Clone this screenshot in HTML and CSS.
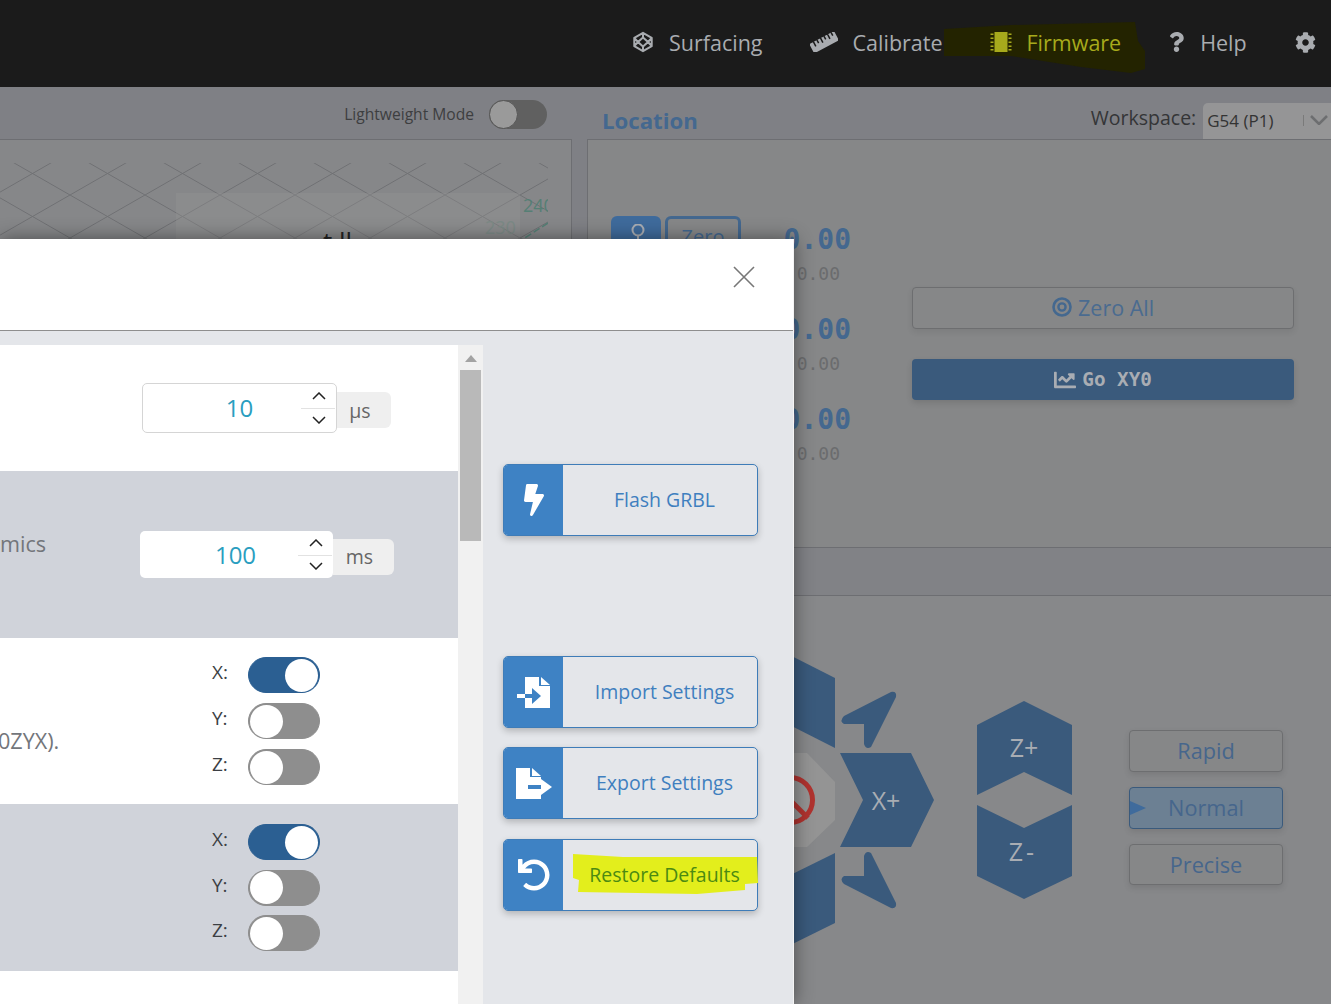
FILE: index.html
```html
<!DOCTYPE html>
<html lang="en">
<head>
  <meta charset="UTF-8">
  <meta name="viewport" content="width=device-width, initial-scale=1">
  <title>Firmware</title>
  <link rel="stylesheet" href="styles.css">
</head>
<body>
  <header class="topbar">
    <nav class="nav">
      <a class="nav-item nav-surfacing">
        <svg class="nav-icon" viewBox="0 0 24 24" width="22" height="22" fill="none" stroke="currentColor" stroke-width="2.2" stroke-linejoin="round"><path d="M12 2l9.5 5.5v9L12 22l-9.5-5.500v-9zM12 7l5.500 5-5.500 5-5.500-5zM12 2v5M12 17v5M2.500 7.500l4 4.500M21.500 7.500l-4 4.500M2.500 16.500l4-4.500M21.500 16.500l-4-4.500"/></svg>
        <span>Surfacing</span>
      </a>
      <a class="nav-item nav-calibrate">
        <svg class="nav-icon" viewBox="0 0 28 20" width="28" height="20"><g transform="rotate(-28 14 10)"><path fill="currentColor" fill-rule="evenodd" d="M0 5h28v10.500H0zM4 5v5h1.500V5zM8 5v3.500h1.500V5zM12 5v5h1.500V5zM16 5v3.500h1.500V5zM20 5v5h1.500V5zM24 5v3.500h1.500V5z"/></g></svg>
        <span>Calibrate</span>
      </a>
      <a class="nav-item nav-firmware">
        <svg class="scribble" viewBox="0 0 201 52" width="201" height="52"><polygon fill="#232300" points="0,7 67,3 191,0 194,19 201,29 201,47 187,51 137,45 67,34 0,34"/></svg>
        <svg class="nav-icon" viewBox="0 0 22 22" width="22" height="22"><path fill="currentColor" d="M4.500 1h13v20h-13zM0.500 2.500h3v1.500h-3zM0.500 6.500h3v1.500h-3zM0.500 10.500h3v1.500h-3zM0.500 14.500h3v1.500h-3zM0.500 18h3v1.500h-3zM18.500 2.500h3v1.500h-3zM18.500 6.500h3v1.500h-3zM18.500 10.500h3v1.500h-3zM18.500 14.500h3v1.500h-3zM18.500 18h3v1.500h-3z"/></svg>
        <span>Firmware</span>
      </a>
      <a class="nav-item nav-help">
        <svg class="nav-icon" viewBox="0 0 384 512" width="15" height="22"><path fill="currentColor" d="M202.021 0C122.202 0 70.503 32.703 29.914 91.026c-7.363 10.58-5.093 25.086 5.178 32.874l43.138 32.709c10.373 7.865 25.132 6.026 33.253-4.148 25.049-31.381 43.63-49.449 82.757-49.449 30.764 0 68.816 19.799 68.816 49.631 0 22.552-18.617 34.134-48.993 51.164-35.423 19.86-82.299 44.576-82.299 106.405V320c0 13.255 10.745 24 24 24h72.471c13.255 0 24-10.745 24-24v-5.773c0-42.86 125.268-44.645 125.268-160.627C377.504 66.256 286.902 0 202.021 0zM192 373.459c-38.196 0-69.271 31.075-69.271 69.271 0 38.195 31.075 69.27 69.271 69.27s69.271-31.075 69.271-69.271-31.075-69.27-69.271-69.27z"/></svg>
        <span>Help</span>
      </a>
      <a class="nav-item nav-gear">
        <svg class="nav-icon" viewBox="0 0 512 512" width="21" height="21"><path fill="currentColor" d="M487.4 315.7l-42.6-24.6c4.3-23.2 4.3-47 0-70.2l42.6-24.6c4.9-2.8 7.1-8.6 5.5-14-11.1-35.6-30-67.8-54.7-94.6-3.8-4.1-10-5.1-14.8-2.3L380.8 110c-17.9-15.4-38.5-27.3-60.8-35.1V25.8c0-5.6-3.9-10.5-9.4-11.7-36.7-8.2-74.3-7.8-109.2 0-5.5 1.2-9.4 6.1-9.4 11.7V75c-22.2 7.9-42.8 19.8-60.8 35.1L88.7 85.5c-4.9-2.8-11-1.9-14.8 2.3-24.7 26.7-43.6 58.9-54.7 94.6-1.7 5.4.6 11.2 5.5 14L67.3 221c-4.3 23.2-4.3 47 0 70.2l-42.6 24.6c-4.9 2.8-7.1 8.6-5.5 14 11.1 35.6 30 67.8 54.7 94.6 3.8 4.1 10 5.1 14.8 2.3l42.6-24.6c17.9 15.4 38.5 27.3 60.8 35.1v49.2c0 5.6 3.9 10.5 9.4 11.7 36.7 8.2 74.3 7.8 109.2 0 5.5-1.2 9.4-6.1 9.4-11.7v-49.2c22.2-7.9 42.8-19.8 60.8-35.1l42.6 24.6c4.9 2.8 11 1.9 14.8-2.3 24.7-26.7 43.6-58.9 54.7-94.6 1.5-5.5-.7-11.3-5.6-14.1zM256 336c-44.1 0-80-35.9-80-80s35.9-80 80-80 80 35.9 80 80-35.9 80-80 80z"/></svg>
      </a>
    </nav>
  </header>

  <main class="page">
    <section class="left-col">
      <div class="left-tools">
        <span class="light-label">Lightweight Mode</span>
        <span class="light-toggle"><span class="light-knob"></span></span>
      </div>
      <div class="viewer">
        <svg class="viewer-grid" width="548" height="100">
          <defs>
            <pattern id="gridcells" width="75" height="43" patternUnits="userSpaceOnUse" x="-5" y="-11">
              <path d="M0 0L75 43M75 0L0 43" stroke="#6f7073" stroke-width="1" fill="none"/>
            </pattern>
          </defs>
          <rect width="548" height="100" fill="url(#gridcells)"/>
          <path d="M548 60L520 78" stroke="#557f75" stroke-width="1.500" stroke-dasharray="7 3"/>
        </svg>
        <div class="temp-panel">
          <span class="temp-240">240</span>
          <span class="temp-230">230</span>
          <span class="temp-title">t ll</span>
        </div>
      </div>
    </section>

    <section class="right-col">
      <div class="loc-head">
        <h2 class="loc-title">Location</h2>
        <span class="ws-label">Workspace:</span>
        <div class="ws-select">
          <span>G54 (P1)</span>
          <i class="ws-sep"></i>
          <svg viewBox="0 0 18 10" width="18" height="10" fill="none" stroke="#6d6e70" stroke-width="2.500"><path d="M1 1l8 8 8-8"/></svg>
        </div>
      </div>
      <div class="loc-card">
        <div class="axes">
          <div class="axis">
            <button class="axis-pin"><svg viewBox="0 0 14 24" width="14" height="24" fill="none" stroke="#a9adb3" stroke-width="2"><circle cx="7" cy="6" r="5.500"/><path d="M7 12v9"/></svg></button>
            <button class="axis-zero">Zero</button>
            <div class="axis-vals"><div class="val-big">0.00</div><div class="val-small">0.00</div></div>
          </div>
          <div class="axis">
            <button class="axis-pin"><svg viewBox="0 0 14 24" width="14" height="24" fill="none" stroke="#a9adb3" stroke-width="2"><circle cx="7" cy="6" r="5.500"/><path d="M7 12v9"/></svg></button>
            <button class="axis-zero">Zero</button>
            <div class="axis-vals"><div class="val-big">0.00</div><div class="val-small">0.00</div></div>
          </div>
          <div class="axis">
            <button class="axis-pin"><svg viewBox="0 0 14 24" width="14" height="24" fill="none" stroke="#a9adb3" stroke-width="2"><circle cx="7" cy="6" r="5.500"/><path d="M7 12v9"/></svg></button>
            <button class="axis-zero">Zero</button>
            <div class="axis-vals"><div class="val-big">0.00</div><div class="val-small">0.00</div></div>
          </div>
        </div>
        <div class="loc-actions">
          <button class="btn-zero-all">
            <svg viewBox="0 0 20 20" width="20" height="20" fill="none" stroke="#44688f"><circle cx="10" cy="10" r="8.500" stroke-width="2.600"/><circle cx="10" cy="10" r="3.600" stroke-width="2.400"/></svg>
            Zero All
          </button>
          <button class="btn-go">
            <svg viewBox="0 0 512 512" width="22" height="22"><path fill="currentColor" d="M496 384H64V80c0-8.840-7.160-16-16-16H16C7.160 64 0 71.160 0 80v336c0 17.670 14.330 32 32 32h464c8.840 0 16-7.160 16-16v-32c0-8.840-7.160-16-16-16zM464 96H345.940c-21.380 0-32.090 25.850-16.970 40.970l32.400 32.400L288 242.750l-73.370-73.370c-12.500-12.500-32.760-12.500-45.250 0l-68.690 68.690c-6.250 6.250-6.250 16.380 0 22.630l22.620 22.620c6.250 6.250 16.380 6.250 22.630 0L192 237.250l73.370 73.370c12.500 12.500 32.760 12.500 45.250 0l96-96 32.400 32.400c15.120 15.120 40.970 4.410 40.970-16.970V112c0-8.840-7.160-16-16-16z"/></svg>
            <span>Go XY0</span>
          </button>
        </div>
      </div>
      <div class="jog-bar"></div>
      <div class="jog">
        <svg class="jog-pad" viewBox="587 596 542 408" width="542" height="408">
          <g fill="#3a5a7c">
            <polygon points="760,640 835,678 835,748 760,710"/>
            <polygon points="760,960 835,923 835,853 760,890"/>
            <polygon points="840,753 911,753 934,800 911,847 840,847 863,800"/>
            <path d="M896 697q1-6-5-5l-47 24q-5 5 0 8l20 0l0 20q2 6 7 3z"/>
            <path d="M896 903q1 6-5 5l-47-24q-5-5 0-8l20 0l0-20q2-6 7-3z"/>
            <polygon points="1024,701 1072,725 1072,795 1024,772 977,795 977,725"/>
            <polygon points="977,805 1024,828 1072,805 1072,876 1024,899 977,876"/>
          </g>
          <polygon points="760,753 807,753 835,782 835,820 807,847 760,847" fill="#949494"/>
          <circle cx="790" cy="800" r="22.500" fill="none" stroke="#b0332f" stroke-width="5"/>
          <path d="M772 782L808 818" stroke="#b0332f" stroke-width="5"/>
          <g class="jog-text">
            <text x="886" y="810" text-anchor="middle">X+</text>
            <text x="1024" y="757" text-anchor="middle">Z+</text>
            <text class="z-minus" x="1023" y="861" text-anchor="middle">Z-</text>
          </g>
        </svg>
        <div class="speeds">
          <button class="speed">Rapid</button>
          <button class="speed speed-on">Normal</button>
          <button class="speed speed-last">Precise</button>
        </div>
      </div>
    </section>
  </main>

  <div class="modal">
    <div class="modal-head">
      <svg class="modal-close" viewBox="0 0 22 22" width="22" height="22" stroke="#777" stroke-width="1.600"><path d="M1 1l20 20M21 1L1 21"/></svg>
    </div>
    <div class="modal-body">
      <div class="settings">
        <div class="setting row-plain">
          <div class="num-group num-outlined">
            <div class="num-box">
              <span class="num-val">10</span>
              <span class="spin">
                <svg viewBox="0 0 14 8" width="14" height="8" fill="none" stroke="#222" stroke-width="1.500"><path d="M1 7l6-6 6 6"/></svg>
                <svg viewBox="0 0 14 8" width="14" height="8" fill="none" stroke="#222" stroke-width="1.500"><path d="M1 1l6 6 6-6"/></svg>
              </span>
            </div>
            <span class="unit">µs</span>
          </div>
        </div>
        <div class="setting row-shaded">
          <span class="set-label label-mics">mics</span>
          <div class="num-group">
            <div class="num-box">
              <span class="num-val">100</span>
              <span class="spin">
                <svg viewBox="0 0 14 8" width="14" height="8" fill="none" stroke="#222" stroke-width="1.500"><path d="M1 7l6-6 6 6"/></svg>
                <svg viewBox="0 0 14 8" width="14" height="8" fill="none" stroke="#222" stroke-width="1.500"><path d="M1 1l6 6 6-6"/></svg>
              </span>
            </div>
            <span class="unit unit-wide">ms</span>
          </div>
        </div>
        <div class="setting row-plain row-axes">
          <span class="set-label label-zyx">0ZYX).</span>
          <div class="axis-toggles">
            <div class="tog-line"><span>X:</span><span class="toggle on"><i></i></span></div>
            <div class="tog-line"><span>Y:</span><span class="toggle"><i></i></span></div>
            <div class="tog-line"><span>Z:</span><span class="toggle"><i></i></span></div>
          </div>
        </div>
        <div class="setting row-shaded row-axes">
          <span class="set-label"></span>
          <div class="axis-toggles">
            <div class="tog-line"><span>X:</span><span class="toggle on"><i></i></span></div>
            <div class="tog-line"><span>Y:</span><span class="toggle"><i></i></span></div>
            <div class="tog-line"><span>Z:</span><span class="toggle"><i></i></span></div>
          </div>
        </div>
      </div>
      <div class="scrollbar">
        <span class="scroll-up"></span>
        <span class="scroll-thumb"></span>
      </div>
      <div class="side">
        <button class="tool tool-flash">
          <span class="tool-icon"><svg viewBox="0 0 320 512" width="20" height="32"><path fill="#fff" d="M296 160H180.600l42.600-129.800C227.200 15 215.700 0 200 0H56C44 0 33.800 8.900 32.200 20.800l-32 240C-2.700 275.200 8.500 288 24 288h118.700L96.600 482.500c-3.600 15.200 8 29.500 23.300 29.500 8.400 0 16.400-4.400 20.800-12l176-304c9.300-15.900-2.200-36-20.700-36z"/></svg></span>
          <span class="tool-text">Flash GRBL</span>
        </button>
        <button class="tool">
          <span class="tool-icon"><svg viewBox="0 0 33 31" width="33" height="31"><path fill="#fff" d="M8 0h14v9h11v22H8zM24 0l9 8h-9z"/><path fill="#3e82c4" d="M8 17h7v-6l9 8-9 8v-6H8z"/><path fill="#fff" d="M0 17h8v4H0z"/></svg></span>
          <span class="tool-text">Import Settings</span>
        </button>
        <button class="tool">
          <span class="tool-icon"><svg viewBox="0 0 36 31" width="36" height="31"><path fill="#fff" d="M0 0h14v9h11v22H0zM16 0l9 8h-9zM25 11l11 8-11 8z"/><path fill="#3e82c4" d="M12 17h13v4H12z"/></svg></span>
          <span class="tool-text">Export Settings</span>
        </button>
        <button class="tool tool-restore">
          <svg class="restore-mark" viewBox="0 0 185 40" width="185" height="40"><polygon fill="#e3ee1c" points="0,0 50,3 184,3 185,29 172,30 172,36 124,40 5,38 6,26 0,24"/></svg>
          <span class="tool-icon"><svg viewBox="0 0 512 512" width="32" height="32"><path fill="#fff" d="M212.333 224.333H12c-6.627 0-12-5.373-12-12V12C0 5.373 5.373 0 12 0h48c6.627 0 12 5.373 12 12v78.112C117.773 39.279 184.260 7.470 258.175 8.007c136.906.994 246.448 111.623 246.157 248.532C504.041 393.258 393.120 504 256.333 504c-64.089 0-122.496-24.313-166.510-64.215-5.099-4.622-5.334-12.554-.467-17.420l33.967-33.967c4.474-4.474 11.662-4.717 16.401-.525C170.760 415.336 211.580 432 256.333 432c97.268 0 176-78.716 176-176 0-97.267-78.716-176-176-176-58.496 0-110.280 28.476-142.274 72.333h98.274c6.627 0 12 5.373 12 12v48c0 6.627-5.373 12-12 12z"/></svg></span>
          <span class="tool-text">Restore Defaults</span>
        </button>
      </div>
    </div>
  </div>
</body>
</html>
```

FILE: styles.css
```css
* {
  box-sizing: border-box;
}
html, body {
  height: 100%;
}
body {
  margin: 0;
  overflow: hidden;
  position: relative;
  background: #87888a;
  font-family: "Open Sans", sans-serif;
}
button {
  font-family: "Open Sans", sans-serif;
  cursor: pointer;
}

/* top bar */
.topbar {
  height: 87px;
  background: #1b1b1b;
}
.nav {
  display: flex;
  align-items: center;
  height: 87px;
  padding: 0 0 3px 632px;
  color: #a9acb0;
  font-size: 21.500px;
}
.nav-item {
  display: flex;
  align-items: center;
  position: relative;
}
.nav-icon {
  flex: none;
  position: relative;
}
.nav-item span {
  position: relative;
}
.nav-surfacing span {
  margin-left: 15px;
}
.nav-calibrate {
  margin-left: 47px;
}
.nav-calibrate span {
  margin-left: 15px;
}
.nav-firmware {
  margin-left: 47px;
  color: #a7aa1c;
}
.nav-firmware span {
  margin-left: 15px;
}
.scribble {
  position: absolute;
  left: -46px;
  top: -6px;
}
.nav-help {
  margin-left: 48px;
}
.nav-help span {
  margin-left: 16px;
}
.nav-gear {
  margin-left: 48px;
}

/* page behind the dialog */
.page {
  display: grid;
  grid-template-columns: 572px 1fr;
  column-gap: 15px;
  height: 917px;
  background: #7f8085;
}
.left-tools {
  height: 52px;
  display: flex;
  align-items: center;
  justify-content: flex-end;
  padding: 2px 25px 0 0;
  gap: 15px;
}
.light-label {
  font-size: 15.600px;
  color: #3d3e40;
}
.light-toggle {
  width: 58px;
  height: 29px;
  border-radius: 15px;
  background: #606060;
  display: flex;
}
.light-knob {
  width: 29px;
  height: 29px;
  border-radius: 50%;
  background: #9a9a9a;
  border: 1px solid #555;
}
.viewer {
  position: relative;
  height: 865px;
  background: #868789;
  border-top: 1px solid #6d6e72;
  border-right: 1px solid #6d6e72;
  overflow: hidden;
}
.viewer-grid {
  display: block;
  margin-top: 23px;
}
.temp-panel {
  position: absolute;
  left: 176px;
  top: 53px;
  width: 344px;
  height: 100px;
  background: rgba(150, 150, 150, .35);
}
.temp-240 {
  position: absolute;
  left: 347px;
  top: 0;
  width: 25px;
  overflow: hidden;
  font-size: 18px;
  color: #557f75;
}
.temp-230 {
  position: absolute;
  left: 309px;
  top: 22px;
  font-size: 18px;
  color: #7c8a86;
}
.temp-title {
  position: absolute;
  left: 147px;
  top: 30px;
  font-size: 26px;
  color: #222;
}

.loc-head {
  height: 52px;
  display: flex;
  align-items: flex-end;
  padding-left: 15px;
}
.loc-title {
  margin: 0 393px 3px 0;
  font-size: 22.200px;
  line-height: 30px;
  font-weight: 700;
  color: #44688f;
}
.ws-label {
  font-size: 19.500px;
  line-height: 28px;
  color: #343537;
  margin-bottom: 7px;
  white-space: nowrap;
}
.ws-select {
  margin-left: 7px;
  flex: none;
  width: 128px;
  height: 36px;
  background: #959596;
  border-radius: 5px 0 0 0;
  display: flex;
  align-items: center;
  padding: 0 0 2px 4px;
  font-size: 17px;
  color: #333;
}
.ws-sep {
  width: 1px;
  height: 11px;
  background: #7a7a7a;
  margin: 0 6px 0 30px;
}
.loc-card {
  height: 408px;
  display: flex;
  background: #868788;
  border-top: 1px solid #6d6e72;
  border-left: 1px solid #6d6e72;
  padding: 76px 37px 0 23px;
}
.axes {
  width: 240px;
  flex: none;
}
.axis {
  display: flex;
  height: 90px;
}
.axis-pin {
  width: 50px;
  height: 46px;
  padding: 8px 0 0 3px;
  border: 0;
  border-radius: 6px;
  background: #3f6b9c;
  display: flex;
  justify-content: center;
  align-items: flex-start;
}
.axis-zero {
  width: 76px;
  height: 46px;
  margin-left: 4px;
  padding: 0 0 5px;
  border: 3px solid #44688f;
  border-radius: 6px;
  background: transparent;
  color: #44688f;
  font-size: 20px;
}
.axis-vals {
  flex: 1;
  padding-top: 1px;
  text-align: right;
  font-family: "DejaVu Sans Mono", monospace;
}
.val-big {
  font-size: 28px;
  line-height: 46px;
  font-weight: 700;
  color: #44688f;
}
.val-small {
  font-size: 18px;
  line-height: 22px;
  color: #6b6c6e;
  padding-right: 11px;
}
.loc-actions {
  flex: 1;
  margin-left: 61px;
  padding-top: 71px;
  display: flex;
  flex-direction: column;
  gap: 30px;
}
.btn-zero-all {
  height: 42px;
  padding: 0 0 2px;
  display: flex;
  align-items: center;
  justify-content: center;
  gap: 6px;
  background: #868788;
  border: 1px solid #6d6e70;
  border-radius: 4px;
  box-shadow: 0 3px 6px rgba(0, 0, 0, .08);
  color: #4a6b90;
  font-size: 21.500px;
}
.btn-go {
  height: 41px;
  display: flex;
  align-items: center;
  justify-content: center;
  gap: 6px;
  background: #3a5a7c;
  border: 0;
  border-radius: 4px;
  box-shadow: 0 3px 6px rgba(0, 0, 0, .12);
  color: #a9adb3;
}
.btn-go span {
  font-family: "DejaVu Sans Mono", monospace;
  font-weight: 700;
  font-size: 19.300px;
  white-space: pre;
}
.jog-bar {
  height: 49px;
  background: #818286;
  border-top: 1px solid #6d6e72;
  border-bottom: 1px solid #6d6e72;
}
.jog {
  display: flex;
  height: 408px;
  background: #87888a;
}
.jog-pad {
  display: block;
  flex: none;
}
.jog-text text {
  font-family: "Open Sans", sans-serif;
  font-size: 25px;
  fill: #a9adb3;
}
.jog-text .z-minus {
  letter-spacing: 3px;
}
.speeds {
  width: 154px;
  display: flex;
  flex-direction: column;
  gap: 15px;
  padding-top: 134px;
}
.speed {
  height: 42px;
  padding: 0 0 2px;
  background: #868788;
  border: 1px solid #6d6e70;
  border-radius: 4px;
  box-shadow: 0 3px 6px rgba(0, 0, 0, .1);
  color: #46668c;
  font-size: 21.700px;
}
.speed-last {
  height: 41px;
  padding: 0;
}
.speed-on {
  position: relative;
  background: #6c8093;
  border-color: #3a5a7c;
}
.speed-on::before {
  content: "";
  position: absolute;
  left: 0;
  top: 13px;
  border-left: 16px solid #3f6b9c;
  border-top: 7px solid transparent;
  border-bottom: 7px solid transparent;
}

/* dialog */
.modal {
  position: absolute;
  left: 0;
  top: 239px;
  width: 794px;
  height: 765px;
  overflow: hidden;
  background: #e4e6ea;
  border-right: 1px solid #f4f4f4;
  box-shadow: 0 0 18px rgba(0, 0, 0, .45);
}
.modal-head {
  height: 92px;
  background: #fff;
  border-bottom: 1px solid #8e8e8e;
  display: flex;
  justify-content: flex-end;
  padding: 27px 38px 0 0;
}
.modal-close {
  display: block;
}
.modal-body {
  display: flex;
  height: 673px;
}
.settings {
  width: 458px;
  flex: none;
  margin-top: 14px;
  background: #fff;
  overflow: hidden;
}
.setting {
  display: flex;
  align-items: center;
  height: 166px;
}
.setting:first-child {
  height: 126px;
  padding-left: 142px;
}
.row-shaded {
  background: #d0d3da;
  height: 167px;
}
.set-label {
  flex: none;
  width: 140px;
  font-size: 21.600px;
  color: #73767b;
}
.label-mics {
  padding-bottom: 22px;
}
.row-axes .set-label {
  flex: 0 0 212px;
}
.row-axes .label-zyx {
  flex-basis: 214px;
  margin-left: -2px;
  padding-top: 38px;
}
.num-group {
  display: flex;
  align-items: center;
}
.num-box {
  position: relative;
  width: 193px;
  height: 47px;
  display: flex;
  align-items: center;
  background: #fff;
  border-radius: 5px;
}
.num-outlined .num-box {
  width: 195px;
  height: 50px;
  border: 1px solid #d5d5d5;
}
.num-val {
  flex: 1;
  padding: 0 0 0 32px;
  text-align: center;
  font-size: 24px;
  color: #2a9ec0;
}
.num-outlined .num-val {
  padding: 0 0 2px 34px;
}
.spin {
  flex: none;
  width: 34px;
  height: 100%;
  display: grid;
  grid-template-rows: 1fr 1fr;
  justify-items: center;
  align-items: center;
}
.spin::before {
  content: "";
  position: absolute;
  right: 1px;
  top: 50%;
  width: 34px;
  height: 1px;
  background: #e2e2e2;
}
.unit {
  width: 54px;
  height: 36px;
  margin-top: 4px;
  padding-right: 8px;
  display: flex;
  align-items: center;
  justify-content: center;
  background: #efefef;
  border-radius: 0 6px 6px 0;
  font-size: 19.500px;
  color: #666;
}
.unit-wide {
  width: 61px;
}
.axis-toggles {
  display: flex;
  flex-direction: column;
  gap: 10px;
}
.row-shaded .axis-toggles {
  gap: 9.500px;
}
.tog-line {
  display: flex;
  align-items: center;
  font-size: 19px;
  color: #3c3f44;
}
.tog-line > span:first-child {
  width: 36px;
  padding-bottom: 6px;
}
.toggle {
  width: 72px;
  height: 36px;
  border-radius: 18px;
  background: #8e8e8e;
  border: 1px solid #8e8e8e;
  display: flex;
  align-items: center;
  padding: 1px;
}
.toggle i {
  width: 33px;
  height: 33px;
  border-radius: 50%;
  background: #fff;
}
.toggle.on {
  background: #2b5f92;
  border-color: #2b5f92;
  justify-content: flex-end;
}
.scrollbar {
  width: 25px;
  flex: none;
  margin-top: 14px;
  background: #f1f1f1;
  padding: 0 2px;
  display: flex;
  flex-direction: column;
  align-items: center;
}
.scroll-up {
  margin-top: 10px;
  border-bottom: 7px solid #a3a3a3;
  border-left: 6px solid transparent;
  border-right: 6px solid transparent;
}
.scroll-thumb {
  display: block;
  width: 21px;
  height: 171px;
  margin-top: 8px;
  background: #b9b9b9;
}
.side {
  flex: 1;
  padding: 133px 35px 0 20px;
  display: flex;
  flex-direction: column;
  gap: 19px;
}
.tool {
  position: relative;
  height: 72px;
  padding: 0;
  display: flex;
  flex: none;
  background: #e4e6ea;
  border: 1px solid #3e7cb8;
  border-radius: 5px;
  box-shadow: 0 3px 7px rgba(0, 0, 0, .22);
  color: #3f7fbf;
  font-size: 19.500px;
  text-align: center;
}
.tool-flash {
  margin-bottom: 101px;
}
.tool-restore {
  margin-top: 1px;
}
.tool-icon {
  width: 59px;
  height: 100%;
  flex: none;
  display: flex;
  align-items: center;
  justify-content: center;
  background: #3e82c4;
  border-radius: 4px 0 0 4px;
}
.tool-text {
  position: relative;
  flex: 1;
  align-self: center;
  padding: 0 0 2px 9px;
}
.tool-restore .tool-text {
  color: #4c8a12;
}
.restore-mark {
  position: absolute;
  left: 69px;
  top: 14px;
}
```
